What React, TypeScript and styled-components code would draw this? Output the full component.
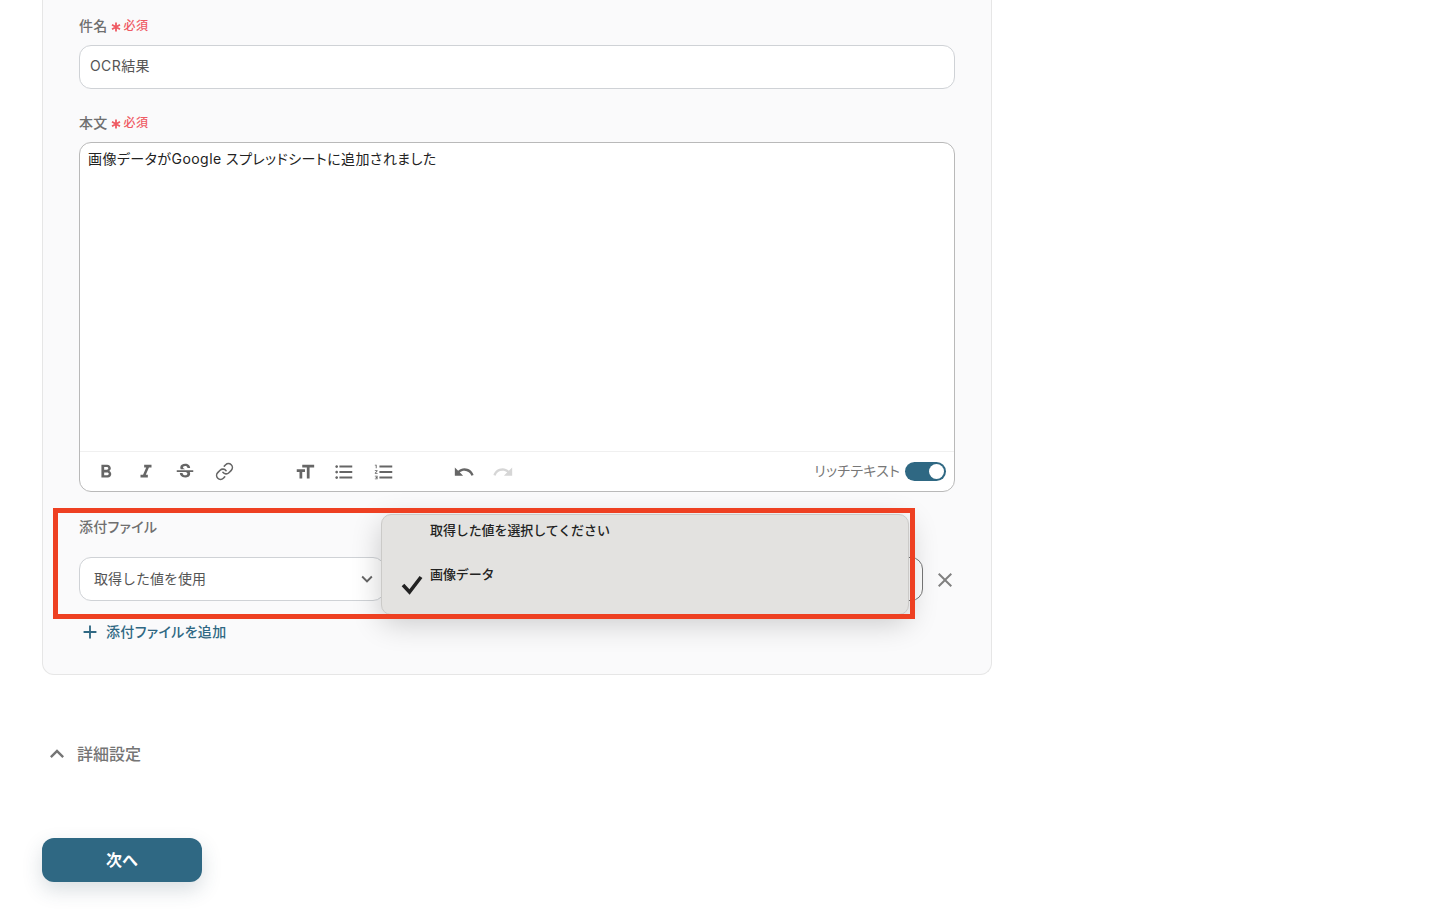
import React from "react";
import styled, { createGlobalStyle } from "styled-components";
import {
  MdAdd,
  MdClose,
  MdExpandLess,
  MdExpandMore,
  MdFormatBold,
  MdFormatItalic,
  MdFormatListBulleted,
  MdFormatListNumbered,
  MdFormatSize,
  MdRedo,
  MdStrikethroughS,
  MdUndo,
} from "react-icons/md";
import { FiLink } from "react-icons/fi";

const GlobalStyle = createGlobalStyle`
  html, body {
    margin: 0;
    padding: 0;
    background: #ffffff;
    overflow: hidden;
  }
  body {
    font-family: Inter, "Noto Sans CJK JP", sans-serif;
    color: #333333;
  }
`;

const Page = styled.div`
  position: relative;
  width: 1432px;
  height: 912px;
  padding-left: 42px;
  box-sizing: border-box;
  overflow: hidden;
`;

const Panel = styled.section`
  width: 950px;
  height: 675px;
  box-sizing: border-box;
  padding: 18px 36px 0;
  background: #fafafb;
  border: 1px solid #e6e6e6;
  border-top: none;
  border-radius: 0 0 12px 12px;
`;

const Label = styled.div`
  display: flex;
  align-items: center;
  height: 17px;
  box-sizing: border-box;
  padding-bottom: 2px;
  font-size: 14px;
  line-height: 15px;
  font-weight: 500;
  font-feature-settings: "palt";
  letter-spacing: 0.3px;
  color: #6f6f6f;
`;

const Required = styled.span`
  display: flex;
  align-items: center;
  gap: 3px;
  margin-left: 3px;
  font-size: 12px;
  letter-spacing: 0.5px;
  color: #ef5a63;
`;

const StarIcon = styled.svg`
  margin-top: 2px;
`;

const TextInput = styled.div`
  height: 44px;
  margin-top: 10px;
  margin-bottom: 26px;
  box-sizing: border-box;
  padding: 0 10px 4px;
  display: flex;
  align-items: center;
  background: #ffffff;
  border: 1px solid #cfd2d6;
  border-radius: 12px;
  font-size: 14px;
  letter-spacing: 0.4px;
  color: #555555;
`;

const Editor = styled.div`
  height: 350px;
  margin-top: 10px;
  box-sizing: border-box;
  display: flex;
  flex-direction: column;
  background: #ffffff;
  border: 1px solid #b9b9b9;
  border-radius: 12px;
`;

const EditorBody = styled.div`
  flex: 1;
  padding: 6px 8px;
  font-size: 14px;
  line-height: 20px;
  font-feature-settings: "palt";
  letter-spacing: 0.45px;
  color: #222222;
`;

const Toolbar = styled.div`
  height: 39px;
  box-sizing: content-box;
  display: flex;
  align-items: center;
  padding: 0 8px 0 15px;
  border-top: 1px solid #f0f0f0;
`;

const ToolGroup = styled.div`
  display: flex;
  align-items: center;
  gap: 17.5px;
  margin-right: 58px;
`;

const ToolIcon = styled.span<{ $muted?: boolean }>`
  display: flex;
  width: 22px;
  height: 22px;
  align-items: center;
  justify-content: center;
  font-size: 24px;
  color: ${(p) => (p.$muted ? "#d6d6d6" : "#666666")};
`;

const ListIcon = styled(ToolIcon)`
  font-size: 26px;
`;

const LinkIcon = styled(ToolIcon)`
  font-size: 19px;
`;

const RichToggle = styled.div`
  margin-left: auto;
  display: flex;
  align-items: center;
  gap: 5px;
  font-size: 14px;
  font-feature-settings: "palt";
  letter-spacing: 0.25px;
  color: #777777;
`;

const RichText = styled.span`
  padding-bottom: 3px;
`;

const Switch = styled.div`
  width: 41px;
  height: 19px;
  box-sizing: border-box;
  padding: 2px;
  display: flex;
  justify-content: flex-end;
  background: #2f6883;
  border-radius: 10px;
`;

const Knob = styled.div`
  width: 15px;
  height: 15px;
  background: #ffffff;
  border-radius: 50%;
`;

const AttachLabel = styled(Label)`
  margin-top: 26px;
  padding-bottom: 0;
`;

const AttachRow = styled.div`
  display: flex;
  align-items: center;
  margin-top: 22px;
`;

const SelectBox = styled.div`
  flex: none;
  width: 306px;
  height: 44px;
  box-sizing: border-box;
  padding: 0 6px 0 14px;
  display: flex;
  align-items: center;
  justify-content: space-between;
  background: #ffffff;
  border: 1px solid #cfd2d6;
  border-radius: 12px;
  font-size: 14px;
  color: #555555;
`;

const SelectText = styled.span`
  padding-bottom: 3px;
`;

const ValueBox = styled.div`
  flex: none;
  width: 538px;
  height: 44px;
  box-sizing: border-box;
  background: #ffffff;
  border: 1px solid #777777;
  border-radius: 12px;
`;

const RemoveButton = styled.span`
  flex: none;
  display: flex;
  margin: 2px 0 0 10px;
  font-size: 24px;
  color: #808080;
`;

const AddLink = styled.div`
  display: flex;
  align-items: center;
  gap: 5px;
  height: 20px;
  margin-top: 21px;
  font-size: 14px;
  font-weight: 500;
  font-feature-settings: "palt";
  letter-spacing: 0.35px;
  color: #2f6883;
`;

const AddText = styled.span`
  padding-bottom: 2px;
`;

const Details = styled.div`
  display: flex;
  align-items: center;
  gap: 6px;
  height: 24px;
  margin: 67px 0 0 1px;
  font-size: 16px;
  font-weight: 500;
  color: #757575;
`;

const DetailsText = styled.span`
  padding-bottom: 3px;
`;

const NextButton = styled.button`
  display: block;
  width: 160px;
  height: 44px;
  margin-top: 72px;
  padding: 0 0 3px;
  background: #2f6883;
  border: none;
  border-radius: 12px;
  box-shadow: 0 8px 20px rgba(47, 72, 88, 0.18);
  color: #ffffff;
  font-family: inherit;
  font-size: 16px;
  font-weight: 700;
`;

const Dropdown = styled.div`
  position: absolute;
  left: 381px;
  top: 514px;
  width: 528px;
  height: 101px;
  box-sizing: border-box;
  background: #e3e2e0;
  border: 1px solid #cbcac8;
  border-radius: 10px;
  box-shadow: 0 8px 30px rgba(0, 0, 0, 0.2);
`;

const Option = styled.div`
  height: 44px;
  padding: 6px 0 0 48px;
  box-sizing: border-box;
  font-size: 13px;
  line-height: 18px;
  font-weight: 500;
  letter-spacing: -0.1px;
  color: #222222;
`;

const CheckMark = styled.svg`
  position: absolute;
  left: 19px;
  top: 60px;
  width: 22px;
  height: 20px;
`;

const Highlight = styled.div`
  position: absolute;
  left: 53px;
  top: 508px;
  width: 862px;
  height: 111px;
  box-sizing: border-box;
  border: 5px solid #ee4022;
  pointer-events: none;
`;

const RequiredMark = () => (
  <Required>
    <StarIcon width="10" height="10" viewBox="0 0 10 10" fill="none" stroke="#ef5a63" strokeWidth="1.8">
      <path d="M5 0.5V9.5M1 2.8L9 7.2M9 2.8L1 7.2" />
    </StarIcon>
    必須
  </Required>
);

export default function App() {
  return (
    <Page>
      <GlobalStyle />
      <Panel>
        <Label>
          件名
          <RequiredMark />
        </Label>
        <TextInput>OCR結果</TextInput>
        <Label>
          本文
          <RequiredMark />
        </Label>
        <Editor>
          <EditorBody>画像データがGoogle スプレッドシートに追加されました</EditorBody>
          <Toolbar>
            <ToolGroup>
              <ToolIcon><MdFormatBold /></ToolIcon>
              <ToolIcon><MdFormatItalic /></ToolIcon>
              <ToolIcon><MdStrikethroughS /></ToolIcon>
              <LinkIcon><FiLink /></LinkIcon>
            </ToolGroup>
            <ToolGroup>
              <ToolIcon><MdFormatSize /></ToolIcon>
              <ListIcon><MdFormatListBulleted /></ListIcon>
              <ListIcon><MdFormatListNumbered /></ListIcon>
            </ToolGroup>
            <ToolGroup>
              <ToolIcon><MdUndo /></ToolIcon>
              <ToolIcon $muted><MdRedo /></ToolIcon>
            </ToolGroup>
            <RichToggle>
              <RichText>リッチテキスト</RichText>
              <Switch>
                <Knob />
              </Switch>
            </RichToggle>
          </Toolbar>
        </Editor>
        <AttachLabel>添付ファイル</AttachLabel>
        <AttachRow>
          <SelectBox>
            <SelectText>取得した値を使用</SelectText>
            <MdExpandMore size={22} color="#666666" />
          </SelectBox>
          <ValueBox />
          <RemoveButton>
            <MdClose />
          </RemoveButton>
        </AttachRow>
        <AddLink>
          <MdAdd size={22} />
          <AddText>添付ファイルを追加</AddText>
        </AddLink>
      </Panel>
      <Details>
        <MdExpandLess size={28} />
        <DetailsText>詳細設定</DetailsText>
      </Details>
      <NextButton>次へ</NextButton>
      <Dropdown>
        <Option>取得した値を選択してください</Option>
        <Option>画像データ</Option>
        <CheckMark viewBox="0 0 22 20" fill="none" stroke="#222222" strokeWidth="3.6">
          <path d="M2 10L8.5 17L20 2" />
        </CheckMark>
      </Dropdown>
      <Highlight />
    </Page>
  );
}
